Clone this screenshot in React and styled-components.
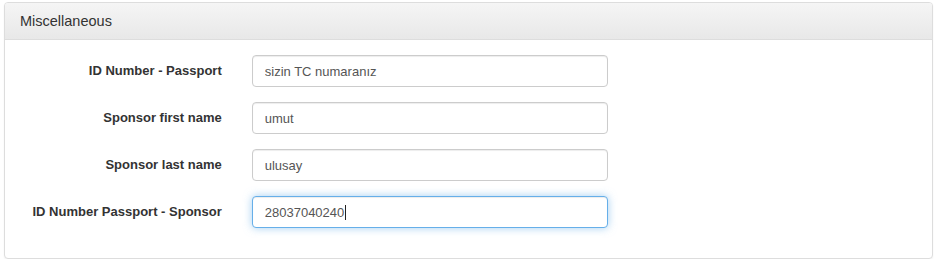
import React from "react";
import styled, { createGlobalStyle } from "styled-components";

const GlobalStyle = createGlobalStyle`
  * { box-sizing: border-box; }
  body {
    margin: 0;
    background: #fff;
    font-family: "Liberation Sans", Arial, sans-serif;
    font-size: 13px;
    line-height: 1.42857;
    color: #333;
  }
`;

const Page = styled.div`
  padding: 2px 7px 0 4px;
`;

const Panel = styled.div`
  border: 1px solid #ddd;
  border-radius: 4px;
  background: #fff;
  box-shadow: 0 1px 2px rgba(0, 0, 0, 0.05);
`;

const Heading = styled.div`
  padding: 10px 15px;
  border-bottom: 1px solid #ddd;
  border-radius: 3px 3px 0 0;
  background-image: linear-gradient(to bottom, #f5f5f5 0, #e8e8e8 100%);
`;

const Title = styled.h3`
  margin: 0;
  font-size: 14.5px;
  font-weight: normal;
  line-height: 16px;
  color: #333;
`;

const Body = styled.div`
  padding: 15px;
`;

const Row = styled.div`
  display: grid;
  grid-template-columns: 25% 41.6667%;
  margin: 0 -15px 15px;
`;

const Label = styled.label`
  padding: 7px 15px 0;
  text-align: right;
  font-weight: bold;
  color: #333;
`;

const Field = styled.div`
  position: relative;
  padding: 0 15px;
`;

const Input = styled.input`
  display: block;
  width: 100%;
  height: 32px;
  padding: 6px 12px;
  font: inherit;
  font-size: 13px;
  color: #555;
  background: #fff;
  border: 1px solid ${(p) => (p.$focused ? "#66afe9" : "#ccc")};
  border-radius: 4px;
  outline: 0;
  box-shadow: ${(p) =>
    p.$focused
      ? "inset 0 1px 1px rgba(0,0,0,.075), 0 0 8px rgba(102,175,233,.6)"
      : "inset 0 1px 1px rgba(0,0,0,.075)"};
`;

// text cursor drawn over the focused field, right after its value
const Caret = styled.span`
  position: absolute;
  top: 9px;
  left: 108px;
  width: 1px;
  height: 15px;
  background: #222;
`;

const fields = [
  { label: "ID Number - Passport", value: "sizin TC numaranız" },
  { label: "Sponsor first name", value: "umut" },
  { label: "Sponsor last name", value: "ulusay" },
  { label: "ID Number Passport - Sponsor", value: "28037040240", focused: true },
];

export default function App() {
  return (
    <>
      <GlobalStyle />
      <Page>
        <Panel>
          <Heading>
            <Title>Miscellaneous</Title>
          </Heading>
          <Body>
            {fields.map((f, i) => (
              <Row key={i}>
                <Label>{f.label}</Label>
                <Field>
                  <Input readOnly value={f.value} $focused={f.focused} />
                  {f.focused && <Caret />}
                </Field>
              </Row>
            ))}
          </Body>
        </Panel>
      </Page>
    </>
  );
}
